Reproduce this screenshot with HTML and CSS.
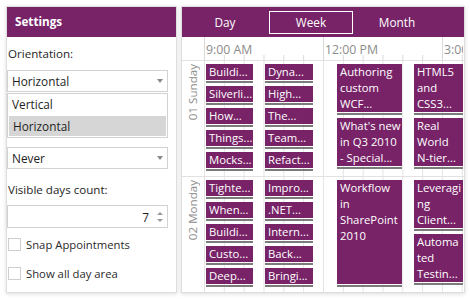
FILE: index.html
```html
<!DOCTYPE html>
<html>
<head>
<meta charset="utf-8">
<title>Scheduler settings</title>
<link rel="stylesheet" href="styles.css">
</head>
<body>
<div class="app">
  <aside class="panel settings">
    <div class="settings-head">Settings</div>
    <div class="settings-body">
      <div class="label label-first">Orientation:</div>
      <div class="combo"><span>Horizontal</span><i class="arrow"></i></div>
      <ul class="dropdown">
        <li>Vertical</li>
        <li class="sel">Horizontal</li>
      </ul>
      <div class="combo combo-never"><span>Never</span><i class="arrow"></i></div>
      <div class="label label-days">Visible days count:</div>
      <div class="numeric"><span class="num">7</span><span class="spin"><i class="up"></i><i class="down"></i></span></div>
      <label class="check check-first"><span class="box"></span>Snap Appointments</label>
      <label class="check check-second"><span class="box"></span>Show all day area</label>
    </div>
  </aside>
  <section class="panel scheduler">
    <nav class="views">
      <span class="tab">Day</span>
      <span class="tab active">Week</span>
      <span class="tab">Month</span>
    </nav>
    <div class="timeline">
      <div class="corner"></div>
      <div class="ruler">
        <span class="hour">9:00 AM</span>
        <span class="hour">12:00 PM</span>
        <span class="hour hour-last">3:00 PM</span>
      </div>
    </div>
    <div class="group">
      <div class="day"><span>01 Sunday</span></div>
      <div class="slots">
        <div class="col c1">
          <div class="appt">Buildi...</div>
          <div class="appt">Silverli...</div>
          <div class="appt">How...</div>
          <div class="appt">Things...</div>
          <div class="appt">Mocks...</div>
        </div>
        <div class="col c2">
          <div class="appt">Dyna...</div>
          <div class="appt">High...</div>
          <div class="appt">The...</div>
          <div class="appt">Team...</div>
          <div class="appt">Refact...</div>
        </div>
        <div class="col c3">
          <div class="appt tall">Authoring<br>custom<br>WCF...</div>
          <div class="appt tall">What's new<br>in Q3 2010<br>- Special...</div>
        </div>
        <div class="col c4">
          <div class="appt tall">HTML5<br>and<br>CSS3...</div>
          <div class="appt tall">Real<br>World<br>N-tier...</div>
        </div>
      </div>
    </div>
    <div class="group group-last">
      <div class="day"><span>02 Monday</span></div>
      <div class="slots">
        <div class="col c1">
          <div class="appt">Tighte...</div>
          <div class="appt">When...</div>
          <div class="appt">Buildi...</div>
          <div class="appt">Custo...</div>
          <div class="appt">Deep...</div>
        </div>
        <div class="col c2">
          <div class="appt">Impro...</div>
          <div class="appt">.NET...</div>
          <div class="appt">Intern...</div>
          <div class="appt">Back...</div>
          <div class="appt">Bringi...</div>
        </div>
        <div class="col c3">
          <div class="appt long">Workflow<br>in<br>SharePoint<br>2010</div>
        </div>
        <div class="col c4">
          <div class="appt tall">Leveragi<br>ng<br>Client...</div>
          <div class="appt tall">Automa<br>ted<br>Testin...</div>
        </div>
      </div>
    </div>
  </section>
</div>
</body>
</html>
```
FILE: styles.css
```css
* {
  box-sizing: border-box;
  margin: 0;
  padding: 0;
}

html, body {
  width: 470px;
  height: 300px;
  overflow: hidden;
  background: #ffffff;
}

body {
  font-family: "Segoe UI", "Open Sans", "Noto Sans", sans-serif;
  font-size: 11.3px;
  color: #1e1e1e;
}

.app {
  display: flex;
  gap: 4px;
  height: 300px;
  padding: 6px 5px 7px 6px;
}

.panel {
  border: 1px solid #dedede;
  background: #ffffff;
  box-shadow: 0 1px 4px rgba(0, 0, 0, 0.14);
}

/* ---------- settings ---------- */
.settings {
  width: 171px;
  flex: none;
  display: flex;
  flex-direction: column;
}

.settings-head {
  height: 30px;
  background: #782368;
  color: #ffffff;
  font-weight: 700;
  font-size: 11.7px;
  line-height: 29px;
  padding-left: 8px;
}

.settings-body {
  display: flex;
  flex-direction: column;
}

.label {
  line-height: 16px;
  padding-left: 1px;
  font-size: 11.6px;
}

.label-first { margin-top: 9px; }
.label-days { margin-top: 13px; }

.combo {
  width: 161px;
  height: 22px;
  margin-top: 8px;
  border: 1px solid #d2d2d2;
  display: flex;
  align-items: center;
  justify-content: space-between;
  padding: 0 4px 0 4px;
  font-size: 11.8px;
}

.arrow {
  width: 0;
  height: 0;
  border-left: 3.5px solid transparent;
  border-right: 3.5px solid transparent;
  border-top: 4px solid #8a8a8a;
}

.dropdown {
  list-style: none;
  width: 161px;
  height: 45px;
  margin-top: 1px;
  border: 1px solid #d2d2d2;
  padding: 0 1px 1px;
  font-size: 11.8px;
}

.dropdown li {
  height: 22px;
  line-height: 21px;
  padding-left: 3px;
}

.dropdown li.sel {
  height: 20px;
  line-height: 20px;
  background: #d6d6d6;
  padding-left: 4px;
}

.combo-never { margin-top: 9px; }

.numeric {
  width: 161px;
  height: 23px;
  margin-top: 7px;
  border: 1px solid #d2d2d2;
  display: flex;
  align-items: center;
  justify-content: flex-end;
  gap: 8px;
  padding-right: 4px;
  font-size: 11.8px;
}

.spin {
  display: flex;
  flex-direction: column;
  gap: 4px;
}

.spin i {
  width: 0;
  height: 0;
  border-left: 3px solid transparent;
  border-right: 3px solid transparent;
}

.spin .up { border-bottom: 3px solid #9a9a9a; }
.spin .down { border-top: 3px solid #9a9a9a; }

.check {
  display: flex;
  align-items: center;
  gap: 5px;
  height: 16px;
  padding-left: 1px;
  color: #2a2a2a;
}

.check-first { margin-top: 8px; }
.check-second { margin-top: 13px; }

.box {
  width: 13px;
  height: 13px;
  border: 1px solid #cfcfcf;
  background: #ffffff;
}

/* ---------- scheduler ---------- */
.scheduler {
  flex: 1;
  display: flex;
  flex-direction: column;
  overflow: hidden;
}

.views {
  height: 30px;
  flex: none;
  display: flex;
  background: #782368;
}

.tab {
  width: 86px;
  display: flex;
  align-items: center;
  justify-content: center;
  color: #ffffff;
  font-size: 11.8px;
  padding-bottom: 1px;
}

.tab.active {
  width: 84px;
  margin: 4px 1px 3px 1px;
  border: 1px solid #ffffff;
}

.timeline {
  height: 24px;
  flex: none;
  display: flex;
  border-bottom: 1px solid #e2e2e2;
}

.corner {
  width: 22px;
  flex: none;
}

.ruler {
  flex: 1;
  display: flex;
  overflow: hidden;
  background:
    linear-gradient(to right, #d9d9d9 1px, transparent 1px) 0 100% / 19.833px 5px repeat-x,
    linear-gradient(to right, #d9d9d9 1px, transparent 1px) 0 0 / 119px 100% repeat-x;
}

.hour {
  width: 119px;
  flex: none;
  padding: 5px 0 0 2px;
  color: #8c8c8c;
  font-size: 12.3px;
  line-height: 16px;
  white-space: nowrap;
  overflow: hidden;
}

.hour-last {
  width: 21px;
}

.group {
  height: 116px;
  flex: none;
  display: flex;
  border-bottom: 1px solid #e2e2e2;
}

.group-last {
  height: 115px;
  border-bottom: 0;
}

.day {
  width: 22px;
  flex: none;
  display: flex;
  justify-content: center;
  align-items: flex-start;
  padding-top: 3px;
}

.day span {
  writing-mode: vertical-rl;
  transform: rotate(180deg);
  color: #8c8c8c;
  font-size: 11.6px;
  line-height: 20px;
  white-space: nowrap;
}

.slots {
  flex: 1;
  position: relative;
  background: linear-gradient(to right, #e4e4e4 1px, transparent 1px) 0 0 / 19.833px 100% repeat-x;
}

.col {
  position: absolute;
  top: 3px;
  display: flex;
  flex-direction: column;
  gap: 3px;
}

.c1 { left: 2px; width: 47px; }
.c2 { left: 61px; width: 48px; }
.c3 { left: 133px; width: 65px; }
.c4 { left: 210px; width: 49px; }

.appt {
  height: 19px;
  padding-left: 3px;
  color: #ffffff;
  font-size: 11.3px;
  line-height: 16px;
  white-space: nowrap;
  overflow: hidden;
  background:
    linear-gradient(#782368, #782368) top / 100% calc(100% - 3px) no-repeat,
    linear-gradient(#7b7b7b, #7b7b7b) bottom / 100% 2px no-repeat;
}

.appt.tall { height: 51px; }
.appt.long { height: 107px; }
```
